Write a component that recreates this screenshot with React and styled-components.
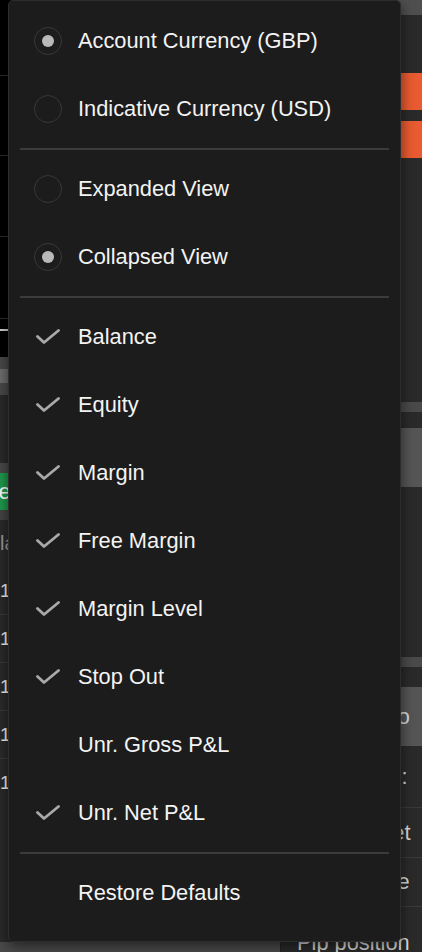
import React from "react";
import styled, { createGlobalStyle } from "styled-components";

const GlobalStyle = createGlobalStyle`
  html, body {
    margin: 0;
    padding: 0;
    background: #2a2a2a;
    font-family: "Liberation Sans", Arial, Helvetica, sans-serif;
  }
  * { box-sizing: border-box; }
`;

const Page = styled.div`
  position: relative;
  width: 422px;
  height: 952px;
  overflow: hidden;
  display: flex;
`;

/* ---------- background app (mostly covered by the menu) ---------- */

const LeftPane = styled.div`
  width: 280px;
  display: flex;
  flex-direction: column;
  background: #2a2a2a;
`;

const ChartRow = styled.div`
  height: ${({ $h }) => $h}px;
  flex: none;
  background: #000;
  border-top: ${({ $first }) => ($first ? "none" : "1px solid #2c2c2c")};
`;

const Tick = styled.div`
  margin-top: 10px;
  width: 8px;
  height: 2px;
  background: #d0d0d0;
`;

const Block = styled.div`
  height: ${({ $h }) => $h}px;
  flex: none;
  background: ${({ $bg }) => $bg};
  color: ${({ $color }) => $color || "#fff"};
  font-size: 20px;
  display: flex;
  align-items: center;
  overflow: hidden;
  white-space: nowrap;
`;

const TabBar = styled.div`
  height: 38px;
  flex: none;
  background: #4a4a4a;
  display: flex;
  align-items: center;
`;

const TabActive = styled.div`
  width: 120px;
  height: 14px;
  background: #6e6e6e;
`;

const GreenButton = styled.div`
  height: 37px;
  flex: none;
  background: #1f9a4d;
  color: #fff;
  font-size: 22px;
  display: flex;
  align-items: center;
  text-indent: -46px;
  overflow: hidden;
`;

const TableRow = styled.div`
  height: 48px;
  flex: none;
  border-bottom: ${({ $last }) => ($last ? "none" : "1px solid #3a3a3a")};
  color: #f0f0f0;
  font-size: 19px;
  display: flex;
  align-items: center;
`;

const Filler = styled.div`
  flex: 1;
`;

const RightPane = styled.div`
  flex: 1;
  display: flex;
  flex-direction: column;
  background: #2a2a2a;
  border-left: 1px solid #222;
`;

const Orange = styled.div`
  height: 37px;
  flex: none;
  background: #e95b31;
  margin-top: ${({ $mt }) => $mt}px;
`;

const GrayButton = styled.div`
  height: ${({ $h }) => $h}px;
  flex: none;
  margin-top: ${({ $mt }) => $mt}px;
  background: ${({ $bg }) => $bg || "#555"};
  color: #d8d8d8;
  font-size: 21.8px;
  display: flex;
  align-items: center;
  justify-content: flex-end;
  padding-right: 12px;
`;

const FormRow = styled.div`
  height: ${({ $h }) => $h || 50}px;
  flex: none;
  border-top: ${({ $line }) => ($line ? "1px solid #3a3a3a" : "none")};
  color: #d8d8d8;
  font-size: 21.8px;
  display: flex;
  align-items: center;
  padding-left: 16px;
  white-space: nowrap;
`;

/* ---------- dropdown menu ---------- */

const Menu = styled.div`
  position: absolute;
  left: 8px;
  top: 0;
  width: 393px;
  padding: 6px 0 14px;
  background: #1c1c1c;
  border: 1px solid #2d2d2d;
  border-radius: 5px;
  box-shadow: 0 4px 14px rgba(0, 0, 0, 0.55);
  display: flex;
  flex-direction: column;
`;

const Item = styled.div`
  height: 68px;
  display: flex;
  align-items: center;
  gap: 16px;
  padding-left: 25px;
  color: #f3f3f3;
  font-size: 21.8px;
  cursor: default;
  white-space: nowrap;
`;

const Indicator = styled.span`
  width: 28px;
  height: 28px;
  flex: none;
  display: flex;
  align-items: center;
  justify-content: center;
`;

const Radio = styled.span`
  width: 28px;
  height: 28px;
  border-radius: 50%;
  border: 1.5px solid #383838;
  display: flex;
  align-items: center;
  justify-content: center;

  &::after {
    content: "";
    width: 12px;
    height: 12px;
    border-radius: 50%;
    background: ${({ $on }) => ($on ? "#b9b9b9" : "transparent")};
  }
`;

const Separator = styled.div`
  height: 12px;
  display: flex;
  align-items: center;
  padding: 0 11px;

  &::before {
    content: "";
    flex: 1;
    height: 1.5px;
    background: #3b3b3b;
  }
`;

const Check = () => (
  <svg width="24" height="16" viewBox="0 0 24 16" fill="none">
    <polyline
      points="1.5,7.5 8,13.5 22.5,1.5"
      stroke="#a9a9a9"
      strokeWidth="2.8"
      strokeLinecap="round"
      strokeLinejoin="round"
    />
  </svg>
);

const currencies = [
  { label: "Account Currency (GBP)", on: true },
  { label: "Indicative Currency (USD)", on: false },
];

const views = [
  { label: "Expanded View", on: false },
  { label: "Collapsed View", on: true },
];

const columns = [
  { label: "Balance", on: true },
  { label: "Equity", on: true },
  { label: "Margin", on: true },
  { label: "Free Margin", on: true },
  { label: "Margin Level", on: true },
  { label: "Stop Out", on: true },
  { label: "Unr. Gross P&L", on: false },
  { label: "Unr. Net P&L", on: true },
];

const RadioItem = ({ label, on }) => (
  <Item>
    <Indicator>
      <Radio $on={on} />
    </Indicator>
    {label}
  </Item>
);

const CheckItem = ({ label, on }) => (
  <Item>
    <Indicator>{on && <Check />}</Indicator>
    {label}
  </Item>
);

const App = () => {
  return (
    <Page>
      <GlobalStyle />

      <LeftPane>
        <ChartRow $h={75} $first />
        <ChartRow $h={80} />
        <ChartRow $h={81} />
        <ChartRow $h={82} />
        <ChartRow $h={39}>
          <Tick />
        </ChartRow>
        <TabBar>
          <TabActive />
        </TabBar>
        <Block $h={68} $bg="#2a2a2a" />
        <Block $h={10} $bg="#4a4a4a" />
        <GreenButton>Trade</GreenButton>
        <Block $h={10} $bg="#444" />
        <Block $h={47} $bg="#2a2a2a" $color="#9a9a9a">
          la
        </Block>
        <TableRow>1</TableRow>
        <TableRow>1</TableRow>
        <TableRow>1</TableRow>
        <TableRow>1</TableRow>
        <TableRow $last>1</TableRow>
        <Filler />
        <Block $h={10} $bg="#4a4a4a" />
      </LeftPane>

      <RightPane>
        <Block $h={15} $bg="#4f4f4f" />
        <Orange $mt={58} />
        <Orange $mt={11} />
        <GrayButton $h={10} $mt={244} $bg="#4a4a4a" />
        <GrayButton $h={59} $mt={16} />
        <GrayButton $h={10} $mt={170} $bg="#4a4a4a" />
        <GrayButton $h={59} $mt={20}>Auto</GrayButton>
        <FormRow $h={61}>Trade Size:</FormRow>
        <FormRow $line>Price Offset</FormRow>
        <FormRow $line $h={49}>Expiry Date</FormRow>
        <FormRow $line $h={72}>Pip position</FormRow>
      </RightPane>

      <Menu>
        {currencies.map((c) => (
          <RadioItem key={c.label} {...c} />
        ))}
        <Separator />
        {views.map((v) => (
          <RadioItem key={v.label} {...v} />
        ))}
        <Separator />
        {columns.map((c) => (
          <CheckItem key={c.label} {...c} />
        ))}
        <Separator />
        <Item>
          <Indicator />
          Restore Defaults
        </Item>
      </Menu>
    </Page>
  );
};

export default App;
